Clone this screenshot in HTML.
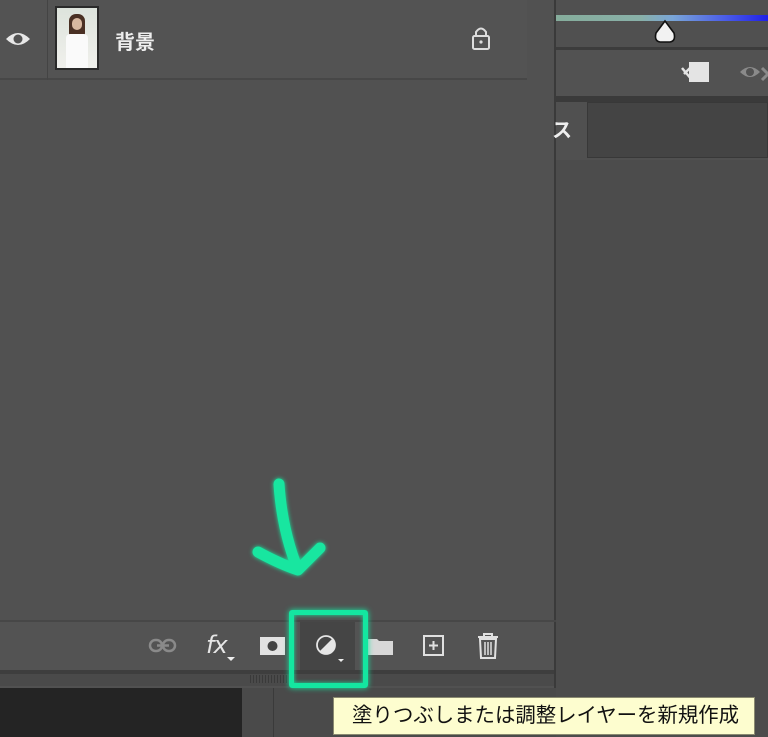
<!DOCTYPE html>
<html><head><meta charset="utf-8"><style>
*{margin:0;padding:0;box-sizing:border-box}
body{width:768px;height:737px;overflow:hidden;background:#4a4a4a;position:relative;font-family:"Liberation Sans","Noto Sans CJK JP",sans-serif}
.a{position:absolute}
</style></head><body>
<div class="a" style="left:556px;top:0;width:212px;height:737px;background:#4c4c4c"></div>
<div class="a" style="left:556px;top:0;width:212px;height:48px;background:#505050"></div>
<div class="a" style="left:556px;top:15px;width:212px;height:6px;background:linear-gradient(90deg,#86ad9c 0%,#88b0a8 40%,#7aa6d8 55%,#4a5ce8 80%,#2020e8 100%)"></div>
<svg class="a" style="left:652px;top:19px" width="26" height="26"><path d="M13 2 L22 14 Q24 22 18 23 L8 23 Q2 22 4 14 Z" fill="#f2f2f2" stroke="#111" stroke-width="1.6"/></svg>
<div class="a" style="left:556px;top:47px;width:212px;height:3px;background:#3c3c3c"></div>
<div class="a" style="left:556px;top:50px;width:212px;height:47px;background:#525252"></div>
<svg class="a" style="left:680px;top:60px" width="40" height="26"><rect x="9" y="2" width="20" height="20" fill="#e4e4e4"/><path d="M2 8 L12 20 M4 14 L10 8 L12 10" stroke="#e4e4e4" stroke-width="2.5" fill="none"/></svg>
<svg class="a" style="left:738px;top:60px" width="30" height="26"><path d="M2 12 Q12 2 22 12 Q12 22 2 12Z" fill="#8a8a8a"/><circle cx="12" cy="12" r="4" fill="#525252"/><path d="M24 8 L30 14 L24 20" stroke="#8a8a8a" stroke-width="3" fill="none"/></svg>
<div class="a" style="left:556px;top:96px;width:212px;height:6px;background:#3a3a3a"></div>
<div class="a" style="left:556px;top:102px;width:212px;height:58px;background:#505050"></div>
<div class="a" style="left:587px;top:102px;width:181px;height:56px;background:#444;border:1px solid #383838"></div>
<div class="a" style="left:0;top:0;width:556px;height:688px;background:#515151;border-right:2px solid #3a3a3a"></div>
<div class="a" style="left:552px;top:114px;color:#eee;font-size:20px;font-weight:bold;z-index:5">ス</div>
<div class="a" style="left:0;top:0;width:527px;height:80px;background:#535353;border-bottom:2px solid #474747"></div>
<div class="a" style="left:47px;top:0;width:1px;height:80px;background:#444"></div>
<svg class="a" style="left:5px;top:29px" width="26" height="20"><path d="M1 10 Q13 -2 25 10 Q13 22 1 10Z" fill="#e8e8e8"/><circle cx="13" cy="10" r="4.5" fill="#535353"/></svg>
<div class="a" style="left:55px;top:6px;width:44px;height:64px;background:#2a2a2a;padding:2px"><div style="width:100%;height:100%;background:linear-gradient(180deg,#dde3dc 0%,#f0f0ec 100%);position:relative"><div style="position:absolute;left:12px;top:6px;width:16px;height:26px;border-radius:7px;background:#4a3024"></div><div style="position:absolute;left:15px;top:10px;width:10px;height:12px;border-radius:5px;background:#d8b8a0"></div><div style="position:absolute;left:9px;top:26px;width:22px;height:34px;background:#fafafa;border-radius:4px 4px 0 0"></div></div></div>
<div class="a" style="left:115px;top:26px;color:#eee;font-size:20px;font-weight:bold">背景</div>
<svg class="a" style="left:470px;top:25px" width="22" height="26"><path d="M6 11 V7 Q11 0 16 7 V11" stroke="#ddd" stroke-width="2" fill="none"/><rect x="3" y="11" width="16" height="13" rx="1.5" stroke="#ddd" stroke-width="2" fill="none"/><circle cx="11" cy="17" r="1.6" fill="#ddd"/></svg>
<div class="a" style="left:0;top:620px;width:556px;height:2px;background:#474747"></div>
<div class="a" style="left:0;top:622px;width:554px;height:48px;background:#535353"></div>
<div class="a" style="left:0;top:670px;width:554px;height:4px;background:#3e3e3e"></div>
<div class="a" style="left:0;top:674px;width:554px;height:12px;background:#4a4a4a"></div>
<div class="a" style="left:250px;top:675px;width:40px;height:8px;background:repeating-linear-gradient(90deg,#3a3a3a 0 1px,#4a4a4a 1px 3px)"></div>
<div class="a" style="left:0;top:688px;width:242px;height:49px;background:#242424"></div>
<div class="a" style="left:242px;top:688px;width:32px;height:49px;background:#4a4a4a;border-right:1px solid #3a3a3a"></div>
<div class="a" style="left:300px;top:622px;width:55px;height:48px;background:#454545"></div>
<svg class="a" style="left:148px;top:636px" width="30" height="20"><rect x="2" y="4" width="12" height="11" rx="5.5" stroke="#8a8a8a" stroke-width="2.5" fill="none"/><rect x="15" y="4" width="12" height="11" rx="5.5" stroke="#8a8a8a" stroke-width="2.5" fill="none"/><line x1="9" y1="9.5" x2="21" y2="9.5" stroke="#8a8a8a" stroke-width="2.5"/></svg>
<div class="a" style="left:206px;top:631px;color:#e6e6e6;font-size:24px;font-style:italic;font-family:'DejaVu Sans',sans-serif;letter-spacing:-1px">fx</div>
<svg class="a" style="left:227px;top:657px" width="8" height="5"><path d="M0 0H8L4 4Z" fill="#eee"/></svg>
<svg class="a" style="left:260px;top:636px" width="26" height="20"><rect x="0" y="1" width="25" height="18" fill="#e2e2e2"/><circle cx="12.5" cy="10" r="5" fill="#444"/></svg>
<svg class="a" style="left:315px;top:634px" width="30" height="30"><circle cx="11" cy="11" r="9" fill="#e6e6e6"/><path d="M4.6 17.4 L17.4 4.6 A9 9 0 0 0 4.6 17.4Z" fill="#454545"/><circle cx="11" cy="11" r="9" fill="none" stroke="#e6e6e6" stroke-width="1.8"/><path d="M23 25H29L26 28Z" fill="#eee"/></svg>
<svg class="a" style="left:368px;top:636px" width="26" height="20"><path d="M0 3H9L11 5H25V19H0Z" fill="#d8d8d8"/></svg>
<svg class="a" style="left:422px;top:634px" width="24" height="24"><rect x="2" y="2" width="19" height="19" stroke="#e0e0e0" stroke-width="2" fill="none"/><path d="M11.5 7V16M7 11.5H16" stroke="#e0e0e0" stroke-width="2"/></svg>
<svg class="a" style="left:476px;top:632px" width="24" height="28"><path d="M2 5H22M8 5V2H16V5" stroke="#e0e0e0" stroke-width="2" fill="none"/><path d="M4 7H20L19 26H5Z" stroke="#e0e0e0" stroke-width="2" fill="none"/><path d="M9 10V23M12 10V23M15 10V23" stroke="#e0e0e0" stroke-width="1.5"/></svg>
<div class="a" style="left:289px;top:610px;width:79px;height:78px;border:5px solid #14e6a0;border-radius:3px;box-shadow:0 0 6px #14e6a0, inset 0 0 4px #14e6a0"></div>
<svg class="a" style="left:240px;top:470px" width="100" height="120"><path d="M39 14 Q42 60 58 100 M18 82 Q40 94 58 100 Q70 88 80 78" stroke="#18e6a0" stroke-width="11" stroke-linecap="round" stroke-linejoin="round" fill="none" style="filter:drop-shadow(0 0 2px #18e6a0)"/></svg>
<div class="a" style="left:333px;top:697px;width:422px;height:38px;background:#fdfdcf;border:1px solid #8a8a70;color:#111;font-size:20.4px;line-height:36px;padding-left:18px;white-space:nowrap">塗りつぶしまたは調整レイヤーを新規作成</div>
</body></html>
